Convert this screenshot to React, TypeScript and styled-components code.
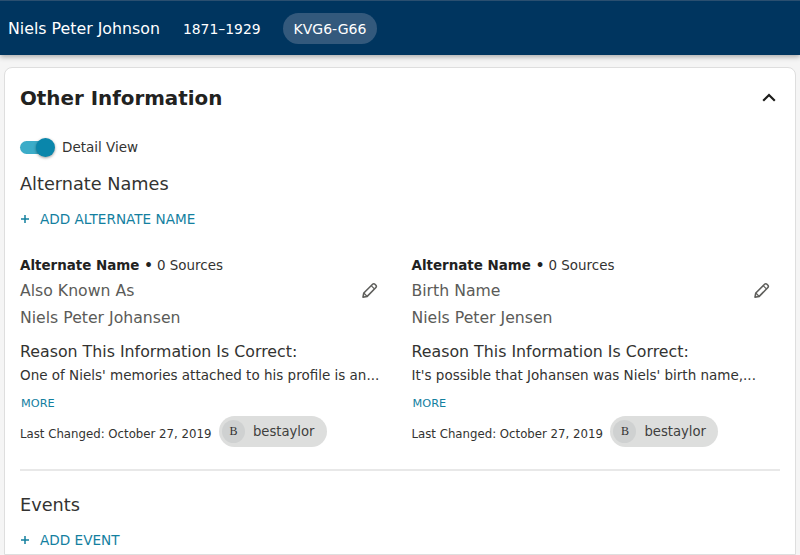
import React from "react";
import styled, { createGlobalStyle } from "styled-components";

const Global = createGlobalStyle`
  html, body { margin: 0; padding: 0; height: 555px; overflow: hidden; background: #f5f5f5; }
  body { font-family: "DejaVu Sans", Verdana, sans-serif; color: #333331; }
  * { box-sizing: border-box; }
`;

const Page = styled.div`
  width: 800px;
  height: 555px;
  overflow: hidden;
  display: flex;
  flex-direction: column;
`;

const Header = styled.header`
  flex: none;
  height: 55px;
  background: #00355f;
  border-top: 1px solid #2a4f70;
  box-shadow: 0 2px 5px rgba(0, 0, 0, 0.3);
  display: flex;
  align-items: center;
  padding: 0 0 0 8px;
  color: #fff;
`;

const PersonName = styled.span`
  font-size: 15.8px;
  padding-top: 1px;
  margin-right: 23px;
`;

const Lifespan = styled.span`
  font-size: 13.9px;
  padding-top: 1px;
  margin-right: 22px;
`;

const PidChip = styled.span`
  font-size: 14px;
  height: 31px;
  padding: 1px 11px 0;
  border-radius: 16px;
  background: #33597c;
  display: flex;
  align-items: center;
`;

const Card = styled.section`
  margin: 12px 4px 0;
  flex: 1;
  background: #fff;
  border: 1px solid #dedede;
  border-radius: 8px 8px 0 0;
  padding: 15px 15px 0;
`;

const CardHead = styled.div`
  display: flex;
  align-items: center;
  justify-content: space-between;
  height: 29px;
  padding-right: 4px;
`;

const CardTitle = styled.h2`
  margin: 0;
  padding-top: 1px;
  font-size: 19.85px;
  font-weight: 700;
  color: #22221f;
`;

const ToggleRow = styled.div`
  display: flex;
  align-items: center;
  gap: 8px;
  margin-top: 23px;
  height: 24px;
  font-size: 13.5px;
  color: #333331;
`;

const Track = styled.span`
  position: relative;
  display: block;
  width: 34px;
  height: 13px;
  border-radius: 7px;
  background: #3cacc8;
`;

const Thumb = styled.span`
  position: absolute;
  right: -1px;
  top: -3px;
  width: 19px;
  height: 19px;
  border-radius: 50%;
  background: #0a86ab;
  box-shadow: 0 1px 3px rgba(0, 0, 0, 0.4);
`;

const SectionTitle = styled.h3`
  margin: 0;
  font-size: 17.7px;
  font-weight: 400;
  line-height: 24px;
  color: #333331;
`;

const NamesTitle = styled(SectionTitle)`
  margin-top: 13px;
`;

const AddLink = styled.a`
  display: flex;
  align-items: center;
  gap: 10px;
  margin-top: 13px;
  height: 20px;
  font-size: 13.6px;
  color: #13809f;
`;

const NameGrid = styled.div`
  display: grid;
  grid-template-columns: 368px 368px;
  column-gap: 23.5px;
  margin-top: 28px;
  padding-bottom: 22px;
  border-bottom: 2px solid #e8e8e8;
`;

const NameItem = styled.article`
  display: flex;
  flex-direction: column;
  min-width: 0;
`;

const ItemLabel = styled.div`
  font-size: 13.45px;
  line-height: 18px;
  color: #333331;
  b { color: #22221f; }
`;

const TypeRow = styled.div`
  display: flex;
  align-items: center;
  justify-content: space-between;
  height: 27px;
  margin-top: 2px;
  padding-right: 10px;
  font-size: 15.7px;
  color: #5b5b58;
`;

const NameValue = styled.div`
  height: 27px;
  display: flex;
  align-items: center;
  font-size: 15.7px;
  color: #5b5b58;
`;

const ReasonTitle = styled.div`
  margin-top: 9px;
  font-size: 15.8px;
  line-height: 24px;
  color: #333331;
`;

const ReasonText = styled.div`
  margin-top: -1px;
  font-size: 13.5px;
  line-height: 24px;
  color: #333331;
  white-space: nowrap;
`;

const MoreLink = styled.a`
  display: block;
  margin-top: 9px;
  padding-left: 1px;
  font-size: 11.3px;
  line-height: 16px;
  color: #13809f;
`;

const ChangedRow = styled.div`
  display: flex;
  align-items: center;
  gap: 7.5px;
  margin-top: 4px;
  font-size: 11.75px;
  color: #333331;
`;

const ChangedText = styled.span`
  padding-top: 4px;
`;

const UserChip = styled.span`
  display: flex;
  align-items: center;
  gap: 8px;
  height: 31px;
  padding: 0 12px 0 3px;
  border-radius: 16px;
  background: #dddedd;
  font-size: 13.2px;
  color: #3f3f3d;
`;

const Avatar = styled.span`
  width: 23px;
  height: 23px;
  border-radius: 50%;
  background: #cfd1d1;
  display: flex;
  align-items: center;
  justify-content: center;
  font-family: "Liberation Serif", serif;
  font-size: 12px;
  color: #333331;
`;

const EventsTitle = styled(SectionTitle)`
  margin-top: 22px;
`;

const EventsAdd = styled(AddLink)`
  margin-top: 13px;
`;

const Pencil = () => (
  <svg width="17" height="17" viewBox="0 0 17 17" fill="none" stroke="#5f5f5c" strokeWidth="1.6" strokeLinejoin="round">
    <path d="M2 15.2 2.8 11 11.6 2.2a1.6 1.6 0 0 1 2.3 0l1 1a1.6 1.6 0 0 1 0 2.3L6.2 14.4 2 15.2Z" />
    <path d="M10.2 3.7 13.4 6.9M2.8 11l3.4 3.4" strokeWidth="1.2" />
  </svg>
);

const Chevron = () => (
  <svg width="14" height="9" viewBox="0 0 14 9" fill="none" stroke="#1d1d1b" strokeWidth="2.2">
    <path d="M1.2 7.8 7 2l5.8 5.8" />
  </svg>
);

const PlusIcon = () => (
  <svg width="10" height="10" viewBox="0 0 10 10" fill="none" stroke="#13809f" strokeWidth="1.5">
    <path d="M5 1v8M1 5h8" />
  </svg>
);

const names = [
  { type: "Also Known As", name: "Niels Peter Johansen", reason: "One of Niels' memories attached to his profile is an..." },
  { type: "Birth Name", name: "Niels Peter Jensen", reason: "It's possible that Johansen was Niels' birth name,..." },
];

export default function App() {
  return (
    <Page>
      <Global />
      <Header>
        <PersonName>Niels Peter Johnson</PersonName>
        <Lifespan>1871–1929</Lifespan>
        <PidChip>KVG6-G66</PidChip>
      </Header>
      <Card>
        <CardHead>
          <CardTitle>Other Information</CardTitle>
          <Chevron />
        </CardHead>
        <ToggleRow>
          <Track><Thumb /></Track>
          <span>Detail View</span>
        </ToggleRow>
        <NamesTitle>Alternate Names</NamesTitle>
        <AddLink><PlusIcon />ADD ALTERNATE NAME</AddLink>
        <NameGrid>
          {names.map((n) => (
            <NameItem key={n.type}>
              <ItemLabel><b>Alternate Name •</b> 0 Sources</ItemLabel>
              <TypeRow>{n.type}<Pencil /></TypeRow>
              <NameValue>{n.name}</NameValue>
              <ReasonTitle>Reason This Information Is Correct:</ReasonTitle>
              <ReasonText>{n.reason}</ReasonText>
              <MoreLink>MORE</MoreLink>
              <ChangedRow>
                <ChangedText>Last Changed: October 27, 2019</ChangedText>
                <UserChip><Avatar>B</Avatar>bestaylor</UserChip>
              </ChangedRow>
            </NameItem>
          ))}
        </NameGrid>
        <EventsTitle>Events</EventsTitle>
        <EventsAdd><PlusIcon />ADD EVENT</EventsAdd>
      </Card>
    </Page>
  );
}
